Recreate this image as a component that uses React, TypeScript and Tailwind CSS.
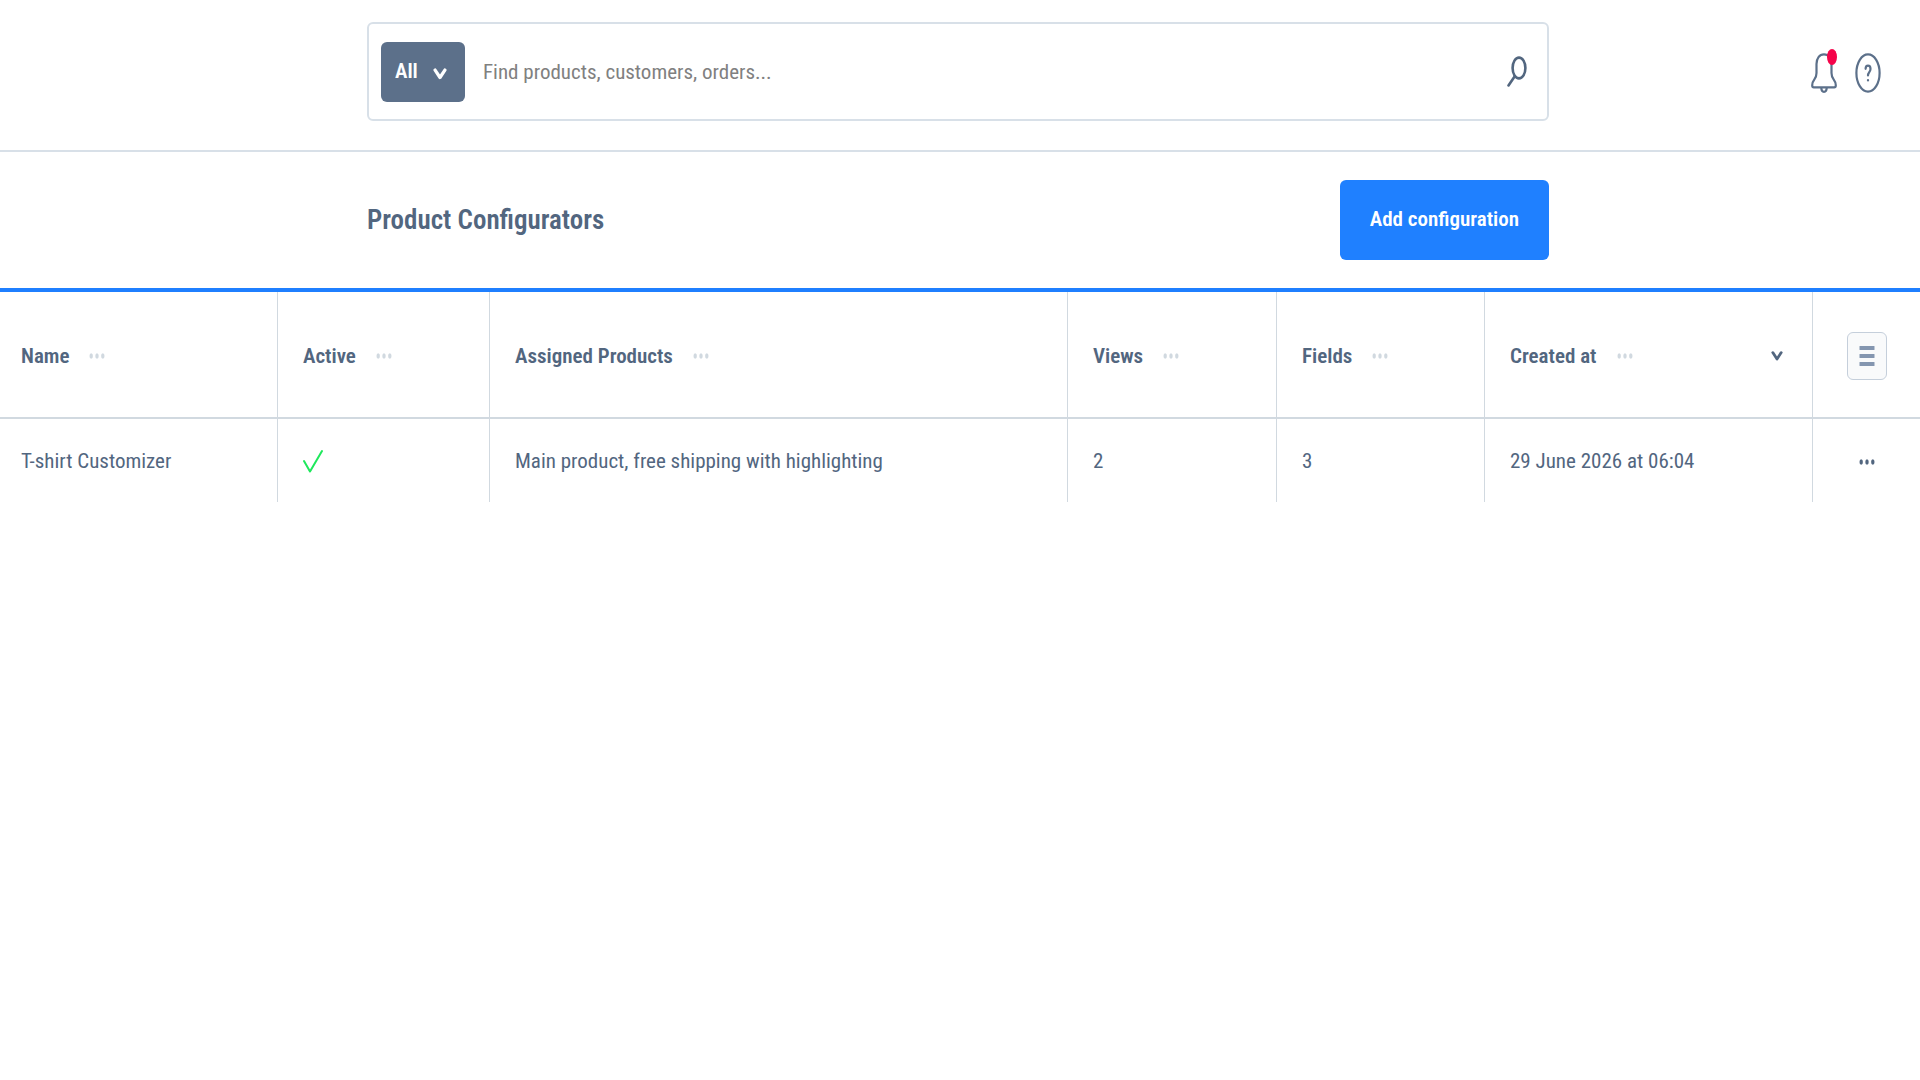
import { useState } from "react";
import type { ReactNode } from "react";
import { clsx } from "clsx";

interface Configurator {
  id: number;
  name: string;
  active: boolean;
  products: string;
  views: number;
  fields: number;
  createdAt: string;
}

const columns = [
  { label: "Name", width: "w-[278px]" },
  { label: "Active", width: "w-[212px]" },
  { label: "Assigned Products", width: "" },
  { label: "Views", width: "w-[209px]" },
  { label: "Fields", width: "w-[208px]" },
  { label: "Created at", width: "w-[328px]", sorted: true },
];

const configurators: Configurator[] = [
  {
    id: 1,
    name: "T-shirt Customizer",
    active: true,
    products: "Main product, free shipping with highlighting",
    views: 2,
    fields: 3,
    createdAt: "29 June 2026 at 06:04",
  },
];

function ChevronIcon({ className }: { className?: string }) {
  return (
    <svg className={className} viewBox="0 0 12 12" preserveAspectRatio="none" fill="none" stroke="currentColor" strokeWidth="2.8" strokeLinecap="round" strokeLinejoin="round" aria-hidden="true">
      <path d="M1.8 2.6 6 9l4.2-6.4" />
    </svg>
  );
}

function SearchIcon() {
  return (
    <svg className="h-8 w-5" viewBox="0 0 20 32" fill="none" stroke="currentColor" strokeWidth="2.6" strokeLinecap="round" aria-hidden="true">
      <ellipse cx="12" cy="12" rx="6.4" ry="10.4" />
      <path d="M7.6 20.4 1.5 29.4" />
    </svg>
  );
}

function BellIcon() {
  return (
    <svg className="h-10 w-[26px]" viewBox="0 0 26 40" fill="none" stroke="currentColor" strokeWidth="2.2" strokeLinejoin="round" aria-hidden="true">
      <path d="M13 1.4C8.4 1.4 5.5 5.5 5.5 11V20C5.500 23 4.700 24.700 3.400 26.400C1.800 28.500 1.200 30 1.200 32.200C1.200 33.600 1.600 34.400 2.800 34.400H23.200C24.400 34.400 24.800 33.600 24.800 32.200C24.800 30 24.200 28.500 22.600 26.400C21.300 24.700 20.500 23 20.500 20V11C20.500 5.500 17.600 1.400 13 1.400Z" />
      <path d="M10.300 34.600C10.300 37 11.400 38.800 13 38.800C14.600 38.800 15.700 37 15.700 34.600" />
    </svg>
  );
}

function HelpIcon() {
  return (
    <svg className="h-10 w-[26px]" viewBox="0 0 26 40" fill="none" stroke="currentColor" strokeWidth="2.2" strokeLinecap="round" aria-hidden="true">
      <ellipse cx="13" cy="20" rx="11.6" ry="18.6" />
      <path d="M10.600 15.800C10.600 13.600 11.600 12.600 13 12.600C14.400 12.600 15.500 13.700 15.500 15.900C15.500 18.900 13 19.200 13 22.400" />
      <path d="M13 27v.4" />
    </svg>
  );
}

function DotsIcon({ className }: { className?: string }) {
  return (
    <svg className={className} viewBox="0 0 16 8" fill="currentColor" aria-hidden="true">
      <ellipse cx="2.2" cy="4" rx="1.7" ry="2.8" />
      <ellipse cx="8" cy="4" rx="1.7" ry="2.8" />
      <ellipse cx="13.8" cy="4" rx="1.7" ry="2.8" />
    </svg>
  );
}

function ListIcon() {
  return (
    <svg className="h-5 w-4" viewBox="0 0 16 20" fill="currentColor" aria-hidden="true">
      <rect x="0.5" y="0" width="15" height="4" rx="0.5" />
      <rect x="0.5" y="8" width="15" height="4" rx="0.5" />
      <rect x="0.5" y="16" width="15" height="4" rx="0.5" />
    </svg>
  );
}

function CheckIcon() {
  return (
    <svg className="h-6 w-5" viewBox="0 0 20 24" fill="none" stroke="currentColor" strokeWidth="2" strokeLinecap="round" strokeLinejoin="round" role="img" aria-label="Active">
      <path d="M1 12 7 22.5 19 2" />
    </svg>
  );
}

function Cell({ children, last }: { children: ReactNode; last?: boolean }) {
  return (
    <td className={clsx("h-[83px] align-middle text-[21px] leading-7", last ? "text-center" : "border-r border-[#d1d9e0] pl-[25px] first:pl-[21px]")}>
      {children}
    </td>
  );
}

export default function App() {
  const [scope, setScope] = useState("all");
  const [term, setTerm] = useState("");

  return (
    <div className="min-h-screen bg-white font-['Roboto_Condensed','Roboto',sans-serif] text-[#52667a]">
      {/* Search bar */}
      <header className="flex items-start border-b-2 border-[#d8e0e8] pt-[22px] pr-1 pb-[29px]">
        <div className="flex-1" />
        <div className="flex h-[99px] w-full max-w-[1182px] items-center rounded-md border-2 border-[#d8e0e8] pr-5 pl-3">
          <div className="relative h-[60px] w-[84px]">
            <select
              value={scope}
              onChange={(e) => setScope(e.target.value)}
              aria-label="Search in"
              className="h-full w-full cursor-pointer appearance-none rounded-md bg-[#5c708a] pl-[14px] text-[21px] font-semibold text-white"
            >
              <option value="all">All</option>
            </select>
            <ChevronIcon className="pointer-events-none absolute top-[25px] right-[18px] h-[14px] w-[14px] text-white" />
          </div>
          <input
            type="text"
            value={term}
            onChange={(e) => setTerm(e.target.value)}
            aria-label="Search"
            placeholder="Find products, customers, orders..."
            className="h-[60px] min-w-0 flex-1 px-[18px] text-[21px] outline-none placeholder:text-[#808080]"
          />
          <button type="button" aria-label="Start search" className="text-[#52667f]">
            <SearchIcon />
          </button>
        </div>
        <div className="flex-1">
          <div className="flex items-center justify-end gap-[18px] pt-[31px] pr-[35px] text-[#5c708a]">
            <button type="button" aria-label="Notifications" className="relative">
              <BellIcon />
              <span className="absolute -top-1 right-0 h-4 w-[10px] rounded-[50%] bg-[#f5044a]" />
            </button>
            <button type="button" aria-label="Help">
              <HelpIcon />
            </button>
          </div>
        </div>
      </header>

      {/* Page title */}
      <div className="flex h-[140px] items-center border-b-4 border-[#1f7fff] pr-1">
        <div className="flex-1" />
        <div className="flex w-full max-w-[1182px] items-center justify-between">
          <h1 className="text-[27px] leading-8 font-semibold text-[#52667f]">Product Configurators</h1>
          <button type="button" className="h-20 rounded-md bg-[#1f80ff] px-[30px] text-[21px] font-semibold text-white">
            Add configuration
          </button>
        </div>
        <div className="flex-1" />
      </div>

      {/* Configurator list */}
      <table className="w-full table-fixed border-separate border-spacing-0 text-left text-[#52667f]">
        <thead>
          <tr>
            {columns.map((column) => (
              <th
                key={column.label}
                scope="col"
                aria-sort={column.sorted ? "descending" : undefined}
                className={clsx("h-[127px] border-r border-b-2 border-[#d1d9e0] pt-[3px] pl-[25px] first:pl-[21px]", column.width)}
              >
                <div className="flex items-center">
                  <span className="text-[21px] leading-7 font-semibold">{column.label}</span>
                  <button type="button" aria-label={`${column.label} options`} className="ml-5 text-[#d1d9e0]">
                    <DotsIcon className="h-2 w-4" />
                  </button>
                  {column.sorted && <ChevronIcon className="mr-[29px] ml-auto h-3 w-3" />}
                </div>
              </th>
            ))}
            <td className="w-[107px] border-b-2 border-[#d1d9e0] pt-[3px] text-center">
              <button
                type="button"
                aria-label="List settings"
                className="inline-flex h-12 w-10 items-center justify-center rounded-md border border-[#c5cfdb] bg-[#f9fafb] align-middle text-[#8496b0]"
              >
                <ListIcon />
              </button>
            </td>
          </tr>
        </thead>
        <tbody>
          {configurators.map((item) => (
            <tr key={item.id}>
              <Cell>{item.name}</Cell>
              <Cell>
                <span className="flex text-[#1fe85c]">{item.active && <CheckIcon />}</span>
              </Cell>
              <Cell>{item.products}</Cell>
              <Cell>{item.views}</Cell>
              <Cell>{item.fields}</Cell>
              <Cell>{item.createdAt}</Cell>
              <Cell last>
                <button type="button" aria-label={`Actions for ${item.name}`} className="align-middle">
                  <DotsIcon className="h-2 w-4" />
                </button>
              </Cell>
            </tr>
          ))}
        </tbody>
      </table>
    </div>
  );
}
